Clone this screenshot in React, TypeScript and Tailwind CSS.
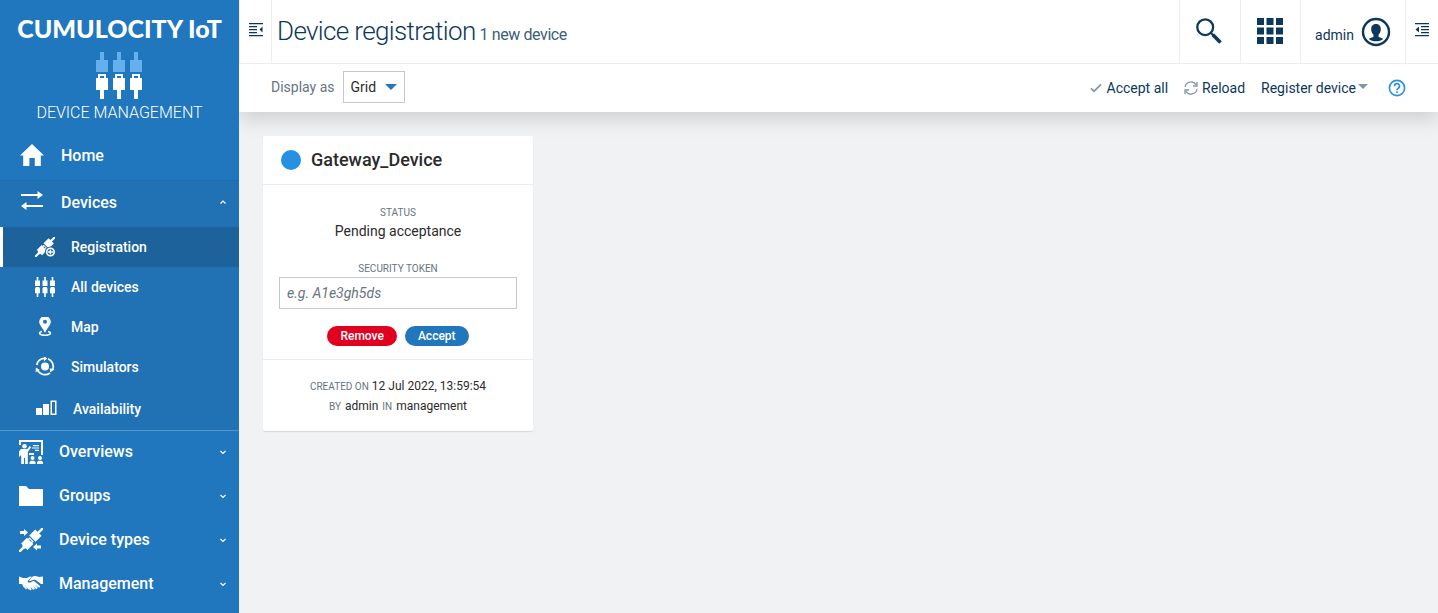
import type { ReactNode } from "react";

const LogoMark = () => (
  <svg width="48" height="47" viewBox="0 0 48 47" aria-hidden="true" className="block">
    {[0, 17, 34].map((x) => (
      <g key={x}>
        <path fill="#63b0ec" d={`M${x + 4} 0h4v8h4v12h-12v-12h4z`} />
        <path fill="#fff" fillRule="evenodd" d={`M${x + 2} 22h8v4h2v12h-4v9h-4v-9h-4v-12h2zM${x + 4} 24v2h4v-2z`} />
      </g>
    ))}
  </svg>
);

const HomeIcon = () => (
  <svg width="24" height="24" viewBox="0 0 24 24" fill="currentColor" aria-hidden="true">
    <path d="M12 0 24 11.500h-3.200V22h-6v-8H9.400v8H3.200V11.500H0z" />
  </svg>
);

const ArrowsIcon = () => (
  <svg width="24" height="24" viewBox="0 0 24 24" fill="currentColor" aria-hidden="true">
    <path d="M1 4h16.500V1l5.500 4-5.500 4V6H1zM23 15H6.500v-3L1 16l5.500 4v-3H23z" />
  </svg>
);

const Plug = () => (
  <g transform="rotate(45 12 12)">
    <path d="M10.800-5h2.400v6.500h3.300v8.500h-9V1.500h3.300z" />
    <path fillRule="evenodd" d="M9 11.200h6v2h1.500v8.300h-2l-1.300 1.500v6h-2.400v-6l-1.300-1.500h-2v-8.300H9zM10.500 12.300v1h3v-1z" />
  </g>
);

const RegistrationIcon = () => (
  <svg width="20" height="20" viewBox="0 0 24 24" fill="currentColor" aria-hidden="true">
    <Plug />
    <circle cx="18.500" cy="18" r="6.600" fill="#1d629b" />
    <circle cx="18.500" cy="18" r="4.500" fill="none" stroke="currentColor" strokeWidth="2" />
    <path d="M17.600 15h1.800v2.100h2.100v1.800h-2.100V21h-1.800v-2.100h-2.100v-1.800h2.100z" />
  </svg>
);

const AllDevicesIcon = () => (
  <svg width="20" height="20" viewBox="0 0 20 20" fill="currentColor" aria-hidden="true">
    {[0, 7.5, 15].map((x) => (
      <path key={x} d={`M${x + 1.7} 0h1.600v3.500h1.700v5.500h-5v-5.500h1.700zM${x + 0.6} 10h3.800v1.200h.6v5h-1.700v3.800h-1.600v-3.800h-1.700v-5h.6z`} />
    ))}
  </svg>
);

const MapIcon = () => (
  <svg width="20" height="20" viewBox="0 0 20 20" fill="currentColor" aria-hidden="true">
    <path fillRule="evenodd" d="M10-1a5.800 5.800 0 0 1 5.800 5.800C15.800 8.500 12 11 10 16 8 11 4.200 8.500 4.200 4.800A5.800 5.800 0 0 1 10-1zm0 3.800a2 2 0 1 0 0 4 2 2 0 0 0 0-4z" />
    <path fill="none" stroke="currentColor" strokeWidth="1.500" d="M7 14.500c-4.500 1-2.600 3.800 3 3.800s7.500-2.800 3-3.800" />
  </svg>
);

const SimulatorsIcon = () => (
  <svg width="20" height="20" viewBox="0 0 20 20" fill="currentColor" aria-hidden="true">
    <circle cx="10" cy="9.500" r="4" />
    <g fill="none" stroke="currentColor" strokeWidth="1.700">
      <path d="M1.800 8A8.300 8.300 0 0 1 9 1.300" />
      <path d="M13 1.800A8.300 8.300 0 0 1 17.500 13" />
      <path d="M15 16A8.300 8.300 0 0 1 2.500 13" />
    </g>
    <path d="M9-1 12.200 1.600 9 4.200zM19.400 12.300l-4.300 3.200-.3-4.300zM.6 15.200l.3-4.600 3.800 2.400z" />
  </svg>
);

const AvailabilityIcon = () => (
  <svg width="21" height="20" viewBox="0 0 21 20" fill="currentColor" aria-hidden="true">
    <path fillRule="evenodd" d="M0 9h6v7H0zM7 5h6v11H7zM14.500 1.500H20.500V16h-6zM16 3v11.500h3V3z" />
  </svg>
);

const OverviewsIcon = () => (
  <svg width="24" height="24" viewBox="0 0 24 24" fill="currentColor" aria-hidden="true">
    <path d="M0 0h24v15h-2V2H2v3H0zM10 13h5v2h-5zM14 5h6v1.200h-6zM13 7.400h7v1.200h-7zM16 9.800h4V11h-4z" />
    <circle cx="5.500" cy="6.200" r="2.300" />
    <path d="M2 9h6.200l2.600-3 1.400 1.200L8.800 12v12H6v-6H5v6H2.200v-9L0 17v-5.500z" />
    <circle cx="13.500" cy="18" r="2" />
    <circle cx="21" cy="18" r="2" />
    <path d="M10.500 24v-2l1.500-1.300h3l1.500 1.300v2zM18 24v-2l1.500-1.300h3L24 22v2z" />
  </svg>
);

const FolderIcon = () => (
  <svg width="24" height="24" viewBox="0 0 24 24" fill="currentColor" aria-hidden="true">
    <path d="M0 2h7l3 3h14v17H0z" />
  </svg>
);

const DeviceTypesIcon = () => (
  <svg width="24" height="24" viewBox="0 0 24 24" fill="currentColor" aria-hidden="true">
    <Plug />
    <path d="M1 3h4V1l4 3.500L5 8V6H1zM22 17.500h-4v-2L14 19l4 3.500v-2h4z" />
  </svg>
);

const HandshakeIcon = () => (
  <svg width="24" height="24" viewBox="0 0 24 24" fill="currentColor" aria-hidden="true">
    <path d="M0 4.500 4 6h4l3-1.500L13 5 8.500 9c.5 2 3 2 5 .3l1.500-.3 6 5c.5 1-.5 2-1.700 1.300L16 12.500l2.500 3c.3 1-1 2-2 1l-2.800-3 2 3c0 1.200-1 1.700-2 .8l-2-2.300.8 2.500c-.5 1-1.500.8-2.500-.3L2.500 12H0z" />
    <path d="m14 4.300 3-.3 3 1 4-.5V12h-2l-6-4.500-3 .7c-1 .8-2 .8-3 .5z" />
    <path d="m5 14 2.500 3M7 13l3 4M4 13l1.500 2" stroke="currentColor" strokeWidth="1.300" />
  </svg>
);

const Chevron = ({ up = false }: { up?: boolean }) => (
  <svg width="8" height="8" viewBox="0 0 8 8" fill="none" stroke="currentColor" strokeWidth="1.200" aria-hidden="true">
    <path d={up ? "M1.500 5.500 4 3l2.500 2.500" : "M1.500 3 4 5.500 6.500 3"} />
  </svg>
);

const DrawerIcon = () => (
  <svg width="14" height="14" viewBox="0 0 14 14" fill="currentColor" aria-hidden="true">
    <path d="M0 0h14v1.300H0zM0 3h8v1.300H0zM0 6h8v1.300H0zM0 9h8v1.300H0zM0 12h14v1.300H0zM13.500 3.500v6L10.500 6.500z" />
  </svg>
);

const DrawerRightIcon = () => (
  <svg width="14" height="14" viewBox="0 0 14 14" fill="currentColor" aria-hidden="true">
    <path d="M0 0h14v1.300H0zM6 3h8v1.300H6zM6 6h8v1.300H6zM6 9h8v1.300H6zM0 12h14v1.300H0zM4 3.500v6L.5 6.500z" />
  </svg>
);

const SearchIcon = () => (
  <svg width="26" height="26" viewBox="0 0 26 26" fill="none" stroke="currentColor" aria-hidden="true">
    <circle cx="9.200" cy="9.200" r="7.900" strokeWidth="2.300" />
    <path d="m14.800 14.800 2.500 2.500" strokeWidth="2" />
    <path d="m16.800 16.800 7.700 7.700" strokeWidth="3.600" />
  </svg>
);

const AppsIcon = () => (
  <svg width="26" height="26" viewBox="0 0 26 26" fill="currentColor" aria-hidden="true">
    {[0, 9.5, 19].map((y) => [0, 9.5, 19].map((x) => <rect key={`${x}-${y}`} x={x} y={y} width="7" height="7" />))}
  </svg>
);

const UserIcon = () => (
  <svg width="30" height="30" viewBox="0 0 30 30" fill="currentColor" aria-hidden="true">
    <circle cx="15" cy="15" r="13" fill="none" stroke="currentColor" strokeWidth="2.400" />
    <path d="M15 7c3.200 0 4.800 2.200 4.800 5.200 0 2.400-1 4.300-2.300 5.500v2c1 1 3.500 1 4.700 2.200-1.800 1.600-4.200 2.300-7.200 2.300s-5.400-.7-7.200-2.300c1.200-1.200 3.700-1.200 4.700-2.200v-2c-1.300-1.200-2.300-3.100-2.300-5.500C10.200 9.200 11.800 7 15 7z" />
  </svg>
);

const CheckIcon = () => (
  <svg width="12" height="12" viewBox="0 0 12 12" fill="none" stroke="#8096a6" strokeWidth="1.800" aria-hidden="true">
    <path d="m1 6.300 3 3 7-7" />
  </svg>
);

const ReloadIcon = () => (
  <svg width="14" height="14" viewBox="0 0 14 14" fill="none" stroke="#8096a6" strokeWidth="1.300" aria-hidden="true">
    <path d="M1 6a6 6 0 0 1 11-2.300M13 1v4H9M13 8A6 6 0 0 1 2 10.300M1 13V9h4" />
  </svg>
);

const HelpIcon = () => (
  <svg width="18" height="18" viewBox="0 0 18 18" fill="none" stroke="#2690e3" strokeWidth="1.600" aria-hidden="true">
    <circle cx="9" cy="9" r="7.600" />
    <path d="M6.500 7.200a2.500 2.500 0 1 1 3.700 2.100c-.8.500-1.200.8-1.200 1.900M9 12.300v1.700" />
  </svg>
);

const subItems: { label: string; icon: ReactNode; active?: boolean }[] = [
  { label: "Registration", icon: <RegistrationIcon />, active: true },
  { label: "All devices", icon: <AllDevicesIcon /> },
  { label: "Map", icon: <MapIcon /> },
  { label: "Simulators", icon: <SimulatorsIcon /> },
];

const groups: { label: string; icon: ReactNode }[] = [
  { label: "Overviews", icon: <OverviewsIcon /> },
  { label: "Groups", icon: <FolderIcon /> },
  { label: "Device types", icon: <DeviceTypesIcon /> },
  { label: "Management", icon: <HandshakeIcon /> },
];

function Sidebar() {
  return (
    <aside className="flex w-[239px] shrink-0 flex-col bg-[#2077bd] text-white">
      <div className="flex flex-col items-center pt-3">
        <div className="whitespace-nowrap font-[Lato,sans-serif] text-[25px] leading-8 font-black">CUMULOCITY IoT</div>
        <div className="mt-2">
          <LogoMark />
        </div>
        <div className="mt-1 text-base leading-5 font-light">DEVICE MANAGEMENT</div>
      </div>
      <nav aria-label="Main" className="mt-2 font-medium">
        <a href="#home" className="flex h-[49px] items-center gap-[17px] pl-5">
          <HomeIcon />
          <span>Home</span>
        </a>
        <div className="border-y border-t-[#1c6dae] border-b-[#5395cb] bg-[#2171b5]">
          <button type="button" aria-expanded="true" className="flex h-[46px] w-full items-center gap-[17px] pr-3 pb-1 pl-5 text-left">
            <ArrowsIcon />
            <span className="flex-1 pt-[2px]">Devices</span>
            <Chevron up />
          </button>
          <ul className="text-sm">
            {subItems.map((item) => (
              <li key={item.label}>
                <a
                  href={`#${item.label}`}
                  className={
                    item.active
                      ? "flex h-10 items-center gap-4 border-l-3 border-white bg-[#1d629b] pl-8"
                      : "flex h-10 items-center gap-4 border-l-3 border-transparent pl-8"
                  }
                >
                  {item.icon}
                  <span>{item.label}</span>
                </a>
              </li>
            ))}
            <li>
              <a href="#Availability" className="flex h-[43px] items-center gap-4 pl-9">
                <AvailabilityIcon />
                <span>Availability</span>
              </a>
            </li>
          </ul>
        </div>
        {groups.map((g) => (
          <button key={g.label} type="button" aria-expanded="false" className="flex h-11 w-full items-center gap-4 pr-3 pb-[3px] pl-[19px] text-left">
            {g.icon}
            <span className="flex-1 pt-px">{g.label}</span>
            <Chevron />
          </button>
        ))}
      </nav>
    </aside>
  );
}

function Header() {
  return (
    <header className="flex h-16 items-stretch border-b border-[#ededef] text-[#0b385b]">
      <button type="button" aria-label="Toggle navigation" className="flex w-[33px] items-center justify-center border-x border-[#ededef] pb-1">
        <DrawerIcon />
      </button>
      <h1 className="flex flex-1 items-baseline gap-1 pt-[14px] pl-[5px] text-[26px] leading-[34px] font-light tracking-tight">
        Device registration
        <small className="text-base font-normal tracking-tight text-[#3c6079]">1 new device</small>
      </h1>
      <button type="button" aria-label="Search" className="flex w-[61px] items-center justify-center border-l border-[#ededef] pr-[2px] pb-[2px]">
        <SearchIcon />
      </button>
      <button type="button" aria-label="Applications" className="flex w-[60px] items-center justify-center border-l border-[#ededef] pr-[2px] pb-[2px]">
        <AppsIcon />
      </button>
      <button type="button" className="flex w-[105px] items-center justify-center gap-[7px] border-l border-[#ededef] text-sm">
        <span className="pt-[6px]">admin</span>
        <UserIcon />
      </button>
      <button type="button" aria-label="Toggle drawer" className="flex w-[33px] items-center justify-center border-l border-[#ededef] pb-1">
        <DrawerRightIcon />
      </button>
    </header>
  );
}

function ActionBar() {
  return (
    <div className="flex h-12 items-center px-8 text-sm text-[#0b385b]">
      <div className="flex items-center gap-2 pb-[2px]">
        <label htmlFor="display" className="text-[#66757f]">
          Display as
        </label>
        <div className="relative">
          <select id="display" defaultValue="Grid" className="block h-8 w-[62px] appearance-none border border-[#c4c9cd] bg-white pl-[7px] text-[#2b2b2b]">
            <option>Grid</option>
            <option>List</option>
          </select>
          <svg width="12" height="6" viewBox="0 0 12 6" aria-hidden="true" className="pointer-events-none absolute top-[13px] right-2">
            <path fill="#2077bd" d="M0 0h12L6 6z" />
          </svg>
        </div>
      </div>
      <div className="ml-auto flex items-center gap-4">
        <button type="button" className="flex items-center gap-[5px]">
          <CheckIcon />
          Accept all
        </button>
        <button type="button" className="flex items-center gap-1">
          <ReloadIcon />
          Reload
        </button>
        <button type="button" className="flex items-center gap-[2px]">
          Register device
          <svg width="10" height="8" viewBox="0 0 10 8" aria-hidden="true">
            <path fill="#8096a6" d="M0 0h10L5 5z" />
          </svg>
        </button>
        <button type="button" aria-label="Help" className="ml-1">
          <HelpIcon />
        </button>
      </div>
    </div>
  );
}

function DeviceCard() {
  return (
    <article className="w-[270px] rounded-xs bg-white text-center text-sm text-[#2b2b2b] shadow-[0_1px_1px_#d5d8da]">
      <div className="flex h-[49px] items-center gap-[10px] border-b border-[#ededef] px-[18px] pb-px">
        <span className="size-5 rounded-full bg-[#2690e3]" />
        <h2 className="text-lg font-medium">Gateway_Device</h2>
      </div>
      <div className="border-b border-[#ededef] px-4 pt-5 pb-[13px]">
        <p className="text-[10px] leading-4 text-[#66757f]">STATUS</p>
        <p className="leading-5">Pending acceptance</p>
        <label htmlFor="token" className="mt-5 block text-[10px] leading-4 text-[#66757f]">
          SECURITY TOKEN
        </label>
        <input
          id="token"
          type="text"
          placeholder="e.g. A1e3gh5ds"
          className="block h-8 w-full border border-[#c4c9cd] px-[7px] placeholder:text-[#66757f] placeholder:italic"
        />
        <div className="mt-[17px] flex justify-center gap-2 text-xs font-medium text-white">
          <button type="button" className="h-5 rounded-full bg-[#e2001f] px-[13px]">
            Remove
          </button>
          <button type="button" className="h-5 rounded-full bg-[#2077bd] px-[13px]">
            Accept
          </button>
        </div>
      </div>
      <div className="pt-4 pb-[15px] text-xs leading-5">
        <p>
          <span className="text-[10px] leading-4 text-[#66757f]">CREATED ON</span> 12 Jul 2022, 13:59:54
        </p>
        <p className="flex items-baseline justify-center gap-1">
          <span className="text-[10px] leading-4 text-[#66757f]">BY</span>
          <span>admin</span>
          <span className="text-[10px] leading-4 text-[#66757f]">IN</span>
          <span>management</span>
        </p>
      </div>
    </article>
  );
}

export default function App() {
  return (
    <div className="flex min-h-screen bg-[#f1f2f4] font-[Roboto,sans-serif]">
      <Sidebar />
      <div className="min-w-0 flex-1 overflow-hidden">
        <div className="bg-white shadow-[0_6px_20px_rgba(0,0,0,0.16)]">
          <Header />
          <ActionBar />
        </div>
        <main className="p-6">
          <DeviceCard />
        </main>
      </div>
    </div>
  );
}
